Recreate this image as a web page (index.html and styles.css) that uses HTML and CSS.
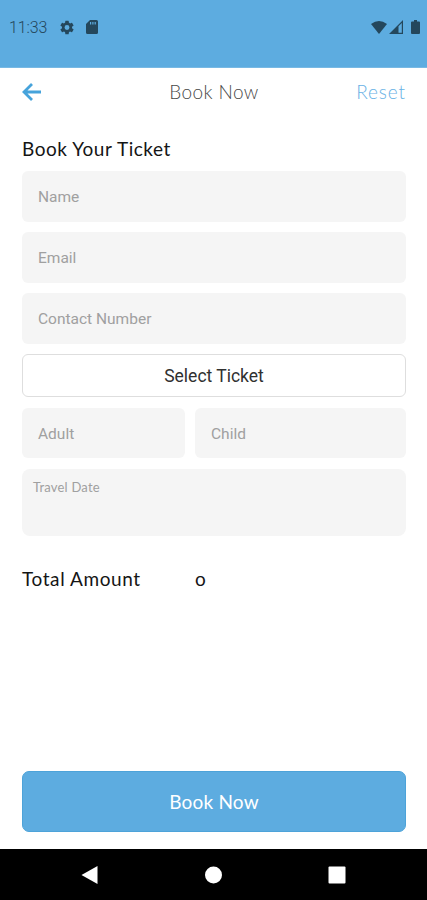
FILE: index.html
```html
<!DOCTYPE html>
<html lang="en">
<head>
<meta charset="utf-8">
<meta name="viewport" content="width=device-width, initial-scale=1">
<title>Book Now</title>
<link rel="stylesheet" href="styles.css">
</head>
<body>
<div class="screen">
  <header class="status">
    <span class="clock">11:33</span>
    <svg class="gear" width="16" height="16" viewBox="2 2 20 20"><path fill-rule="evenodd" d="M19.14 12.94c.04-.3.06-.61.06-.94s-.02-.64-.07-.94l2.03-1.58a.49.49 0 0 0 .12-.61l-1.92-3.32a.49.49 0 0 0-.59-.22l-2.39.96a7 7 0 0 0-1.62-.94l-.36-2.54a.48.48 0 0 0-.48-.41h-3.84a.48.48 0 0 0-.47.41l-.36 2.54c-.59.24-1.13.57-1.62.94l-2.39-.96a.48.48 0 0 0-.59.22L2.74 8.87a.48.48 0 0 0 .12.61l2.03 1.58a6 6 0 0 0 0 1.88l-2.03 1.58a.49.49 0 0 0-.12.61l1.92 3.32c.12.22.37.29.59.22l2.39-.96c.5.38 1.03.7 1.62.94l.36 2.54c.05.24.24.41.48.41h3.84c.24 0 .44-.17.47-.41l.36-2.54c.59-.24 1.13-.56 1.62-.94l2.39.96c.22.08.47 0 .59-.22l1.92-3.32a.48.48 0 0 0-.12-.61zM12 15.500a3.500 3.500 0 1 1 0-7 3.500 3.500 0 0 1 0 7z"/></svg>
    <svg class="card" width="12" height="14" viewBox="0 0 12 14"><path fill-rule="evenodd" d="M4 0h6.5Q12 0 12 1.5v11q0 1.500-1.500 1.500h-9Q0 14 0 12.500V4zM4 2v2.500h1.200V2zm2.300 0v2.500h1.200V2zm2.300 0v2.500h1.200V2z"/></svg>
    <svg class="wifi" width="16" height="13" viewBox="0 0 16 13"><path d="M0 3Q8-3 16 3L8 13z"/></svg>
    <svg class="signal" width="14" height="14" viewBox="0 0 14 14"><path fill-rule="evenodd" d="M14 0v14H0zM9.500 6.300V12.800h3.300V2.900z"/></svg>
    <svg class="battery" width="9" height="14" viewBox="0 0 9 14"><path d="M3 0h3v1.500h2q1 0 1 1V13q0 1-1 1H1q-1 0-1-1V2.500q0-1 1-1h2z"/></svg>
  </header>
  <nav class="toolbar">
    <svg class="back" width="19" height="18" viewBox="0 0 19 18"><path d="M10 1L2 9l8 8M2 9h17"/></svg>
    <h1 class="title">Book Now</h1>
    <span class="reset">Reset</span>
  </nav>
  <main class="content">
    <h2 class="heading">Book Your Ticket</h2>
    <form class="form">
      <div class="field"><span>Name</span></div>
      <div class="field"><span>Email</span></div>
      <div class="field"><span>Contact Number</span></div>
      <div class="select"><span>Select Ticket</span></div>
      <div class="pair">
        <div class="field"><span>Adult</span></div>
        <div class="field"><span>Child</span></div>
      </div>
      <div class="date"><span>Travel Date</span></div>
    </form>
    <div class="total"><span>Total Amount</span><span class="amount">o</span></div>
    <div class="submit"><span>Book Now</span></div>
  </main>
  <footer class="system">
    <svg width="17" height="20" viewBox="0 0 17 20"><path d="M16.500 1v18L.5 10z"/></svg>
    <svg width="18" height="18" viewBox="0 0 18 18"><circle cx="9.500" cy="9" r="8.500"/></svg>
    <svg width="18" height="18" viewBox="0 0 18 18"><rect x=".5" y=".5" width="17" height="17" rx="1"/></svg>
  </footer>
</div>
</body>
</html>
```
FILE: styles.css
```css
* { box-sizing: border-box; }
body { margin: 0; background: #fff; font-family: Lato, "Open Sans", sans-serif; color: #151515; }
.screen { width: 427px; height: 900px; display: flex; flex-direction: column; overflow: hidden; }
svg { display: block; flex: none; }
h1, h2 { margin: 0; font-weight: 400; }
.status { height: 68px; padding: 0 7px 13px 9px; display: flex; align-items: center; background: #5dace0; border-bottom: 1px solid #78b9e4; fill: #24475c; flex: none; }
.clock { width: 51px; padding-top: 2px; font: 300 16px/20px Roboto, sans-serif; color: #24475c; letter-spacing: -.1px; }
.gear { width: 14px; height: 15px; }
.card { margin-left: 12px; }
.wifi { margin-left: auto; }
.signal { margin-left: 2px; }
.battery { margin-left: 8px; }
.toolbar { height: 49px; padding: 0 21px 2px 22px; display: grid; grid-template-columns: 60px 1fr 60px; align-items: center; flex: none; }
.back { fill: none; stroke: #46a3db; stroke-width: 2.800; }
.title { font-size: 19px; line-height: 24px; text-align: center; color: #484848; font-weight: 300; letter-spacing: .4px; }
.reset { font-size: 19px; line-height: 24px; text-align: right; color: #68b1e5; font-weight: 300; letter-spacing: .9px; }
.content { flex: 1; padding: 19px 21px 17px 22px; display: flex; flex-direction: column; }
.heading { height: 35px; font-size: 19px; line-height: 26px; letter-spacing: .55px; }
.form { display: flex; flex-direction: column; gap: 10.500px; }
.field { height: 50.500px; padding: 2px 16px 0; display: flex; align-items: center; background: #f5f5f5; border-radius: 6px; font: 400 15.500px/20px Roboto, sans-serif; color: #a0a0a0; }
.select { height: 43px; padding-top: 1px; display: flex; align-items: center; justify-content: center; border: 1.500px solid #dedede; border-radius: 6px; font: 400 17.500px/20px Roboto, sans-serif; color: #303030; }
.pair { display: grid; grid-template-columns: 162.500px 1fr; gap: 10.500px; }
.date { height: 67px; padding: 9px 11px; background: #f5f5f5; border-radius: 8px; font-size: 13px; line-height: 18px; letter-spacing: .2px; color: #a0a0a0; }
.total { margin-top: 30px; display: grid; grid-template-columns: 173px 1fr; font-size: 19px; line-height: 26px; letter-spacing: .6px; }
.submit { margin-top: auto; height: 61px; display: flex; align-items: center; justify-content: center; background: #5dace0; border: 1px solid #4da3d9; border-radius: 7px; font-size: 19px; line-height: 24px; letter-spacing: .2px; color: #fff; }
.system { height: 51px; padding: 0 81px; display: flex; align-items: center; justify-content: space-between; background: #000; fill: #fff; flex: none; }
```
